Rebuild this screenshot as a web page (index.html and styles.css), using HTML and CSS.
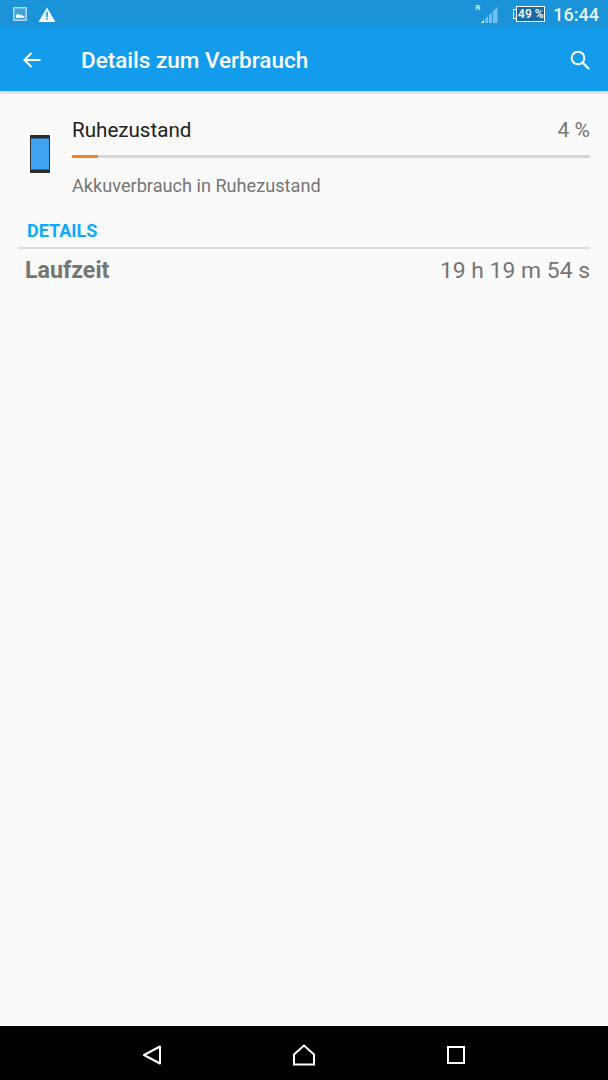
FILE: index.html
```html
<!DOCTYPE html>
<html>
<head>
    <meta charset="utf-8" />
    <title>Details zum Verbrauch</title>
    <link rel="stylesheet" href="styles.css">
</head>
<body>
<div class="screen">
    <div class="status">
        <svg class="ic-picture" width="15" height="14" viewBox="0 0 15 14">
            <rect x="0.75" y="0.75" width="12.5" height="12.5" fill="#fff" fill-opacity=".15" stroke="#fff" stroke-opacity=".7" stroke-width="1.3"/>
            <path d="M3 11V8l2-1.500 1.500 1.500 1.500-.5 1 1 2.500.5v1.500z" fill="#fff"/>
        </svg>
        <svg class="ic-warn" width="18" height="15" viewBox="0 0 18 15">
            <path d="M9 0.500L17.500 15H0.500z" fill="#fff" fill-opacity=".95"/>
            <rect x="8.200" y="5" width="1.600" height="5" fill="#1b93d8"/>
            <rect x="8.200" y="11" width="1.600" height="1.700" fill="#1b93d8"/>
        </svg>
        <span class="spacer"></span>
        <span class="roaming">R</span>
        <svg class="ic-signal" width="17" height="18" viewBox="0 0 17 18">
            <path d="M0 17h3v-3z" fill="#fff"/>
            <path d="M4 17h3V10l-3 3zM8 17h3V6L8 9zM12 17h4.500V1L12 5z" fill="#fff" fill-opacity=".4"/>
        </svg>
        <span class="battery"><span class="battery-tip"></span><span class="battery-body">49 %</span></span>
        <span class="clock">16:44</span>
    </div>
    <div class="appbar">
        <svg class="ic-back" width="20" height="18" viewBox="0 0 20 18">
            <path d="M18.500 9H2.500M9.500 2L2.500 9l7 7" fill="none" stroke="#fff" stroke-width="2"/>
        </svg>
        <span class="title">Details zum Verbrauch</span>
        <svg class="ic-search" width="22" height="22" viewBox="0 0 22 22">
            <circle cx="9" cy="9" r="6.300" fill="none" stroke="#fff" stroke-width="2"/>
            <path d="M13.500 13.500l6.500 6.500" fill="none" stroke="#fff" stroke-width="2.200"/>
        </svg>
    </div>
    <div class="content">
        <div class="usage">
            <svg class="ic-phone" width="20" height="38" viewBox="0 0 20 38">
                <rect width="20" height="38" rx="1" fill="#2b2b2b"/>
                <rect x="1" y="3.500" width="18" height="31" fill="#3fa4f2"/>
            </svg>
            <div class="usage-main">
                <div class="usage-head">
                    <span class="usage-name">Ruhezustand</span>
                    <span class="usage-pct">4 %</span>
                </div>
                <div class="bar"><div class="bar-fill" style="width: 5%"></div></div>
                <div class="usage-desc">Akkuverbrauch in Ruhezustand</div>
            </div>
        </div>
        <div class="section-label">DETAILS</div>
        <div class="detail-row">
            <span class="detail-key">Laufzeit</span>
            <span class="detail-val">19 h 19 m 54 s</span>
        </div>
    </div>
    <div class="navbar">
        <svg width="20" height="22" viewBox="0 0 20 22">
            <path d="M18 2.500V19.500L2 11z" fill="none" stroke="#fff" stroke-width="2" stroke-linejoin="round"/>
        </svg>
        <svg width="24" height="22" viewBox="0 0 24 22">
            <path d="M2 20.500V10.500L12 1.500l10 9v10z" fill="none" stroke="#fff" stroke-width="2"/>
        </svg>
        <svg width="20" height="20" viewBox="0 0 20 20">
            <rect x="2" y="2" width="16" height="16" fill="none" stroke="#fff" stroke-width="2"/>
        </svg>
    </div>
</div>
</body>
</html>
```

FILE: styles.css
```css
html, body {
    margin: 0;
    padding: 0;
}
body {
    background: #fafafa;
    font-family: Roboto, "Liberation Sans", sans-serif;
}
.screen {
    width: 608px;
    height: 1080px;
    display: flex;
    flex-direction: column;
    overflow: hidden;
}

.status {
    height: 28px;
    box-sizing: border-box;
    padding: 0 9px 0 13px;
    background: #1b93d8;
    display: flex;
    align-items: center;
    color: #fff;
}
.ic-warn {
    margin-left: 10px;
}
.spacer {
    flex: 1;
}
.roaming {
    font-size: 8px;
    font-weight: 700;
    align-self: flex-start;
    margin: 3px 0 0 0;
    color: #d5ecfa;
}
.ic-signal {
    margin-left: 1px;
    margin-top: 2px;
}
.battery {
    display: flex;
    align-items: center;
    margin-left: 15px;
}
.battery-tip {
    width: 2px;
    height: 8px;
    border: 1px solid #fff;
    border-right: 0;
}
.battery-body {
    width: 27px;
    height: 14px;
    border: 1px solid #fff;
    background: #1a6aa3;
    font-size: 12px;
    line-height: 14px;
    font-weight: 500;
    text-align: center;
    white-space: nowrap;
}
.clock {
    margin-left: 8px;
    font-size: 18px;
    font-weight: 500;
    color: #e8f4fc;
}

.appbar {
    height: 63px;
    background: #149cec;
    display: flex;
    align-items: center;
    padding: 0 17px 0 22px;
    box-sizing: border-box;
    color: #fff;
    box-shadow: 0 2px 3px rgba(0, 0, 0, .18);
    position: relative;
}
.title {
    margin-left: 39px;
    flex: 1;
    font-size: 22.500px;
    font-weight: 500;
}

.content {
    flex: 1;
    padding: 0 18px;
}
.usage {
    display: flex;
    padding-top: 25px;
}
.ic-phone {
    margin: 19px 0 0 12px;
}
.usage-main {
    flex: 1;
    margin-left: 22px;
}
.usage-head {
    display: flex;
    justify-content: space-between;
    align-items: baseline;
    line-height: 28px;
}
.usage-name {
    font-size: 20.600px;
    color: #212121;
}
.usage-pct {
    font-size: 21px;
    color: #757575;
}
.bar {
    height: 3px;
    margin-top: 11px;
    background: #d3d7d9;
}
.bar-fill {
    height: 100%;
    background: #ff7f1a;
}
.usage-desc {
    margin-top: 16px;
    font-size: 18.150px;
    line-height: 24px;
    color: #757575;
}
.section-label {
    margin-top: 21px;
    padding: 0 0 5px 9px;
    border-bottom: 2px solid #d9dbdc;
    font-size: 18px;
    line-height: 23px;
    font-weight: 700;
    color: #0faaff;
}
.detail-row {
    display: flex;
    justify-content: space-between;
    align-items: baseline;
    padding: 6px 0 0 7px;
    line-height: 30px;
    color: #757575;
}
.detail-key {
    font-size: 23.200px;
    font-weight: 700;
}
.detail-val {
    font-size: 22.900px;
}

.navbar {
    height: 54px;
    box-sizing: border-box;
    background: #000;
    display: flex;
    align-items: center;
    padding: 4px 142px 0;
    justify-content: space-between;
}
```
